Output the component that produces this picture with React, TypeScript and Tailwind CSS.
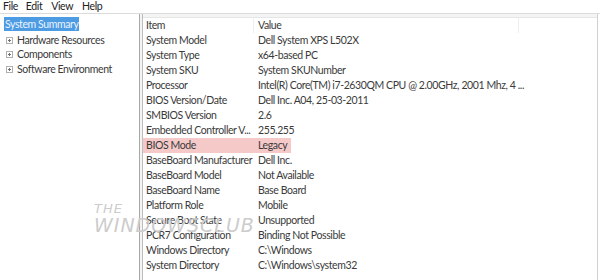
const rows: [string, string][] = [
  ["System Model", "Dell System XPS L502X"],
  ["System Type", "x64-based PC"],
  ["System SKU", "System SKUNumber"],
  ["Processor", "Intel(R) Core(TM) i7-2630QM CPU @ 2.00GHz, 2001 Mhz, 4 ..."],
  ["BIOS Version/Date", "Dell Inc. A04, 25-03-2011"],
  ["SMBIOS Version", "2.6"],
  ["Embedded Controller V...", "255.255"],
  ["BIOS Mode", "Legacy"],
  ["BaseBoard Manufacturer", "Dell Inc."],
  ["BaseBoard Model", "Not Available"],
  ["BaseBoard Name", "Base Board"],
  ["Platform Role", "Mobile"],
  ["Secure Boot State", "Unsupported"],
  ["PCR7 Configuration", "Binding Not Possible"],
  ["Windows Directory", "C:\\Windows"],
  ["System Directory", "C:\\Windows\\system32"],
];

const tree = ["Hardware Resources", "Components", "Software Environment"];

function PlusBox() {
  return (
    <svg width="7" height="7" viewBox="0 0 7 7" className="shrink-0">
      <rect x="0.5" y="0.5" width="6" height="6" fill="white" stroke="#b0b0b0" />
      <path d="M2 3.5h3M3.5 2v3" stroke="#707070" />
    </svg>
  );
}

export default function App() {
  return (
    <div
      className="relative w-[600px] h-[280px] overflow-hidden bg-white text-[10.5px] tracking-[-0.4px] text-[#3a3a3a]"
      style={{ fontFamily: 'Lato, "Open Sans", sans-serif' }}
    >
      {/* Menu bar */}
      <div className="flex h-[14px] items-center leading-none text-[#222] border-b border-[#dcdcdc]">
        <span className="ml-[3px]">File</span>
        <span className="ml-[8px]">Edit</span>
        <span className="ml-[9px]">View</span>
        <span className="ml-[9px]">Help</span>
      </div>

      <div className="flex h-[266px]">
        {/* Tree pane */}
        <div className="w-[140px] border-r border-[#a8a8a8] pt-[3px] pl-[4px]">
          <div className="inline-block h-[14px] bg-[#4d9be3] px-[1px] leading-[14px] text-[#eaf4ff]">
            System Summary
          </div>
          {tree.map((t) => (
            <div key={t} className="flex h-[14.5px] items-center gap-[4px] pl-[2px] leading-none">
              <PlusBox />
              <span>{t}</span>
            </div>
          ))}
        </div>

        {/* Splitter */}
        <div className="w-[3px] bg-[#f3f3f3] border-r border-[#bdbdbd]" />

        {/* List pane */}
        <div className="flex-1 border-r border-[#d0d0d0] mr-[2px]">
          <div className="h-[4px] bg-[#f4f4f4] border-b border-[#e6e6e6]" />
          <div className="flex h-[15px] items-center">
            <div className="w-[111px] pl-[3px] border-r border-[#eeeeee] h-full flex items-center">Item</div>
            <div className="w-[265px] pl-[4px] border-r border-[#eeeeee] h-full flex items-center">Value</div>
          </div>
          {rows.map(([k, v]) => (
            <div
              key={k}
              className={`flex h-[15px] items-center whitespace-nowrap ${
                k === "BIOS Mode" ? "w-[148px] bg-[#f6c9c9]" : ""
              }`}
            >
              <div className="w-[111px] shrink-0 pl-[3px] overflow-hidden">{k}</div>
              <div className="pl-[4px]">{v}</div>
            </div>
          ))}
        </div>
      </div>

      {/* Watermark */}
      <div
        className="pointer-events-none absolute left-[94px] top-[202px] italic text-[#cccccc] leading-none"
        style={{ fontFamily: '"DejaVu Sans", sans-serif' }}
      >
        <div className="text-[13px] tracking-[1px] font-light">THE</div>
        <div className="mt-[1px] text-[19px] tracking-[1px] font-light">WINDOWSCLUB</div>
      </div>
    </div>
  );
}
